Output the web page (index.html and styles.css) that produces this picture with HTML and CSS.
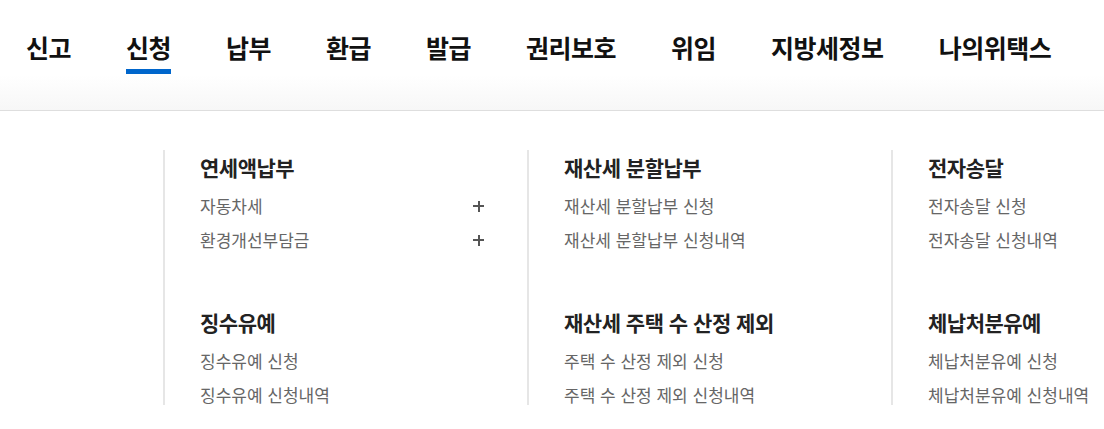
FILE: index.html
```html
<!DOCTYPE html>
<html lang="ko">
<head>
    <meta charset="UTF-8">
    <meta name="viewport" content="width=device-width, initial-scale=1.0">
    <title>신청</title>
    <link rel="stylesheet" href="styles.css">
</head>
<body>

<header class="gnb">
    <ul class="gnb-list">
        <li><a href="#">신고</a></li>
        <li><a href="#" class="active">신청</a></li>
        <li><a href="#">납부</a></li>
        <li><a href="#">환급</a></li>
        <li><a href="#">발급</a></li>
        <li><a href="#">권리보호</a></li>
        <li><a href="#">위임</a></li>
        <li><a href="#">지방세정보</a></li>
        <li><a href="#">나의위택스</a></li>
    </ul>
</header>

<div class="submenu">
    <div class="cols">
        <div class="col col-wide">
            <div class="group">
                <h3>연세액납부</h3>
                <ul>
                    <li class="has-sub"><a href="#">자동차세</a><span class="plus"></span></li>
                    <li class="has-sub"><a href="#">환경개선부담금</a><span class="plus"></span></li>
                </ul>
            </div>
            <div class="group">
                <h3>징수유예</h3>
                <ul>
                    <li><a href="#">징수유예 신청</a></li>
                    <li><a href="#">징수유예 신청내역</a></li>
                </ul>
            </div>
        </div>
        <div class="col">
            <div class="group">
                <h3>재산세 분할납부</h3>
                <ul>
                    <li><a href="#">재산세 분할납부 신청</a></li>
                    <li><a href="#">재산세 분할납부 신청내역</a></li>
                </ul>
            </div>
            <div class="group">
                <h3>재산세 주택 수 산정 제외</h3>
                <ul>
                    <li><a href="#">주택 수 산정 제외 신청</a></li>
                    <li><a href="#">주택 수 산정 제외 신청내역</a></li>
                </ul>
            </div>
        </div>
        <div class="col">
            <div class="group">
                <h3>전자송달</h3>
                <ul>
                    <li><a href="#">전자송달 신청</a></li>
                    <li><a href="#">전자송달 신청내역</a></li>
                </ul>
            </div>
            <div class="group">
                <h3>체납처분유예</h3>
                <ul>
                    <li><a href="#">체납처분유예 신청</a></li>
                    <li><a href="#">체납처분유예 신청내역</a></li>
                </ul>
            </div>
        </div>
    </div>
</div>

</body>
</html>
```

FILE: styles.css
```css
* {
    box-sizing: border-box;
}
body {
    margin: 0;
    font-family: "Noto Sans CJK KR", "Noto Sans", sans-serif;
    background: #fff;
    overflow: hidden;
}
ul {
    list-style: none;
    margin: 0;
    padding: 0;
}
a {
    text-decoration: none;
    color: inherit;
}
.gnb {
    height: 111px;
    padding: 30px 0 0 26px;
    border-bottom: 1px solid #dedede;
    background: linear-gradient(to bottom, #fff 68%, #f7f7f7 100%);
}
.gnb-list {
    display: flex;
    gap: 55px;
}
.gnb-list a {
    display: block;
    font-size: 25px;
    font-weight: bold;
    letter-spacing: -0.5px;
    line-height: 34px;
    color: #111;
    padding-bottom: 5px;
    border-bottom: 5px solid transparent;
}
.gnb-list a.active {
    border-bottom-color: #0066cc;
}
.submenu {
    height: 294px;
    padding-top: 39px;
    overflow: hidden;
}
.cols {
    display: grid;
    grid-template-columns: repeat(3, 364px);
    margin-left: 163px;
    height: 100%;
}
.col {
    border-left: 2px solid #e6e6e6;
    padding: 3px 42px 0 35px;
    height: 100%;
}
.group + .group {
    margin-top: 51px;
}
.group h3 {
    margin: 0;
    font-size: 21px;
    font-weight: bold;
    letter-spacing: -0.5px;
    line-height: 28px;
    color: #222;
}
.group ul {
    margin-top: 8px;
}
.group li {
    display: flex;
    justify-content: space-between;
    align-items: center;
    font-size: 17px;
    letter-spacing: 0;
    line-height: 34px;
    color: #666;
}
.plus {
    position: relative;
    width: 11px;
    height: 11px;
    margin-right: 1px;
}
.plus::before,
.plus::after {
    content: "";
    position: absolute;
    background: #555;
}
.plus::before {
    left: 0;
    top: 4.5px;
    width: 11px;
    height: 2px;
}
.plus::after {
    top: 0;
    left: 4.5px;
    width: 2px;
    height: 11px;
}
```
